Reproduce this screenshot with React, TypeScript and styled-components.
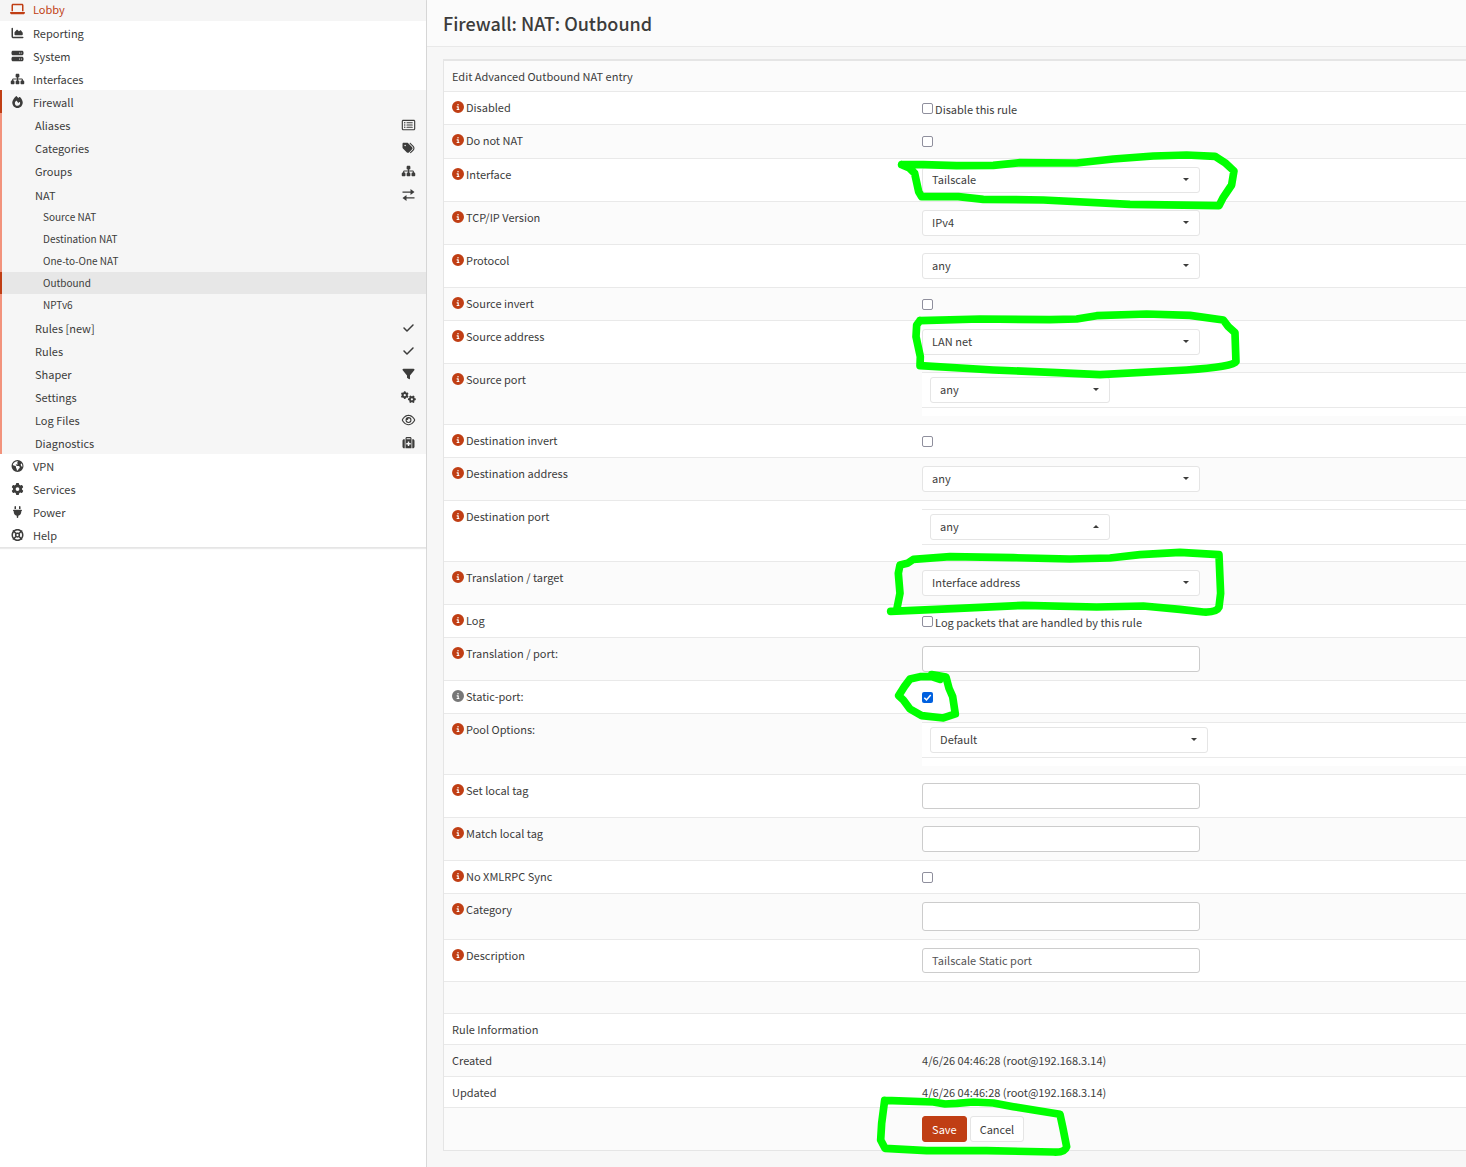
import React from "react";
import styled, { createGlobalStyle, css } from "styled-components";
import type { IconType } from "react-icons";
import {
  FaLaptop,
  FaChartArea,
  FaServer,
  FaSitemap,
  FaFire,
  FaEarthAmericas,
  FaGear,
  FaPlug,
  FaLifeRing,
  FaRegRectangleList,
  FaTags,
  FaCheck,
  FaFilter,
  FaGears,
  FaRegEye,
  FaSuitcaseMedical,
  FaCircleInfo,
} from "react-icons/fa6";

const accent = "#c03e14";
const line = "#e9e9e9";
const text = "#3c3c3b";

const GlobalStyle = createGlobalStyle`
  *, *::before, *::after { box-sizing: border-box; }
  body {
    margin: 0;
    background: #fff;
    color: ${text};
    font-family: "Noto Sans CJK SC", "Noto Sans", sans-serif;
    font-size: 11px;
    line-height: 16px;
  }
  button, input, select { font: inherit; color: inherit; }
`;

const Page = styled.div`
  position: relative;
  display: flex;
  min-height: 100vh;
  overflow: hidden;
`;

/* ---------- sidebar ---------- */

const Sidebar = styled.aside`
  flex: 0 0 427px;
  border-right: 1px solid #d9d9d9;
`;

const Menu = styled.nav`
  border-bottom: 1px solid #e5e5e5;
  box-shadow: 0 1px 1px rgba(0, 0, 0, 0.08);
`;

const List = styled.ul`
  margin: 0;
  padding: 0;
  list-style: none;
`;

const Group = styled.div`
  background: #f6f6f6;
`;

const SubList = styled(List)`
  border-left: 2px solid #f2937c;
`;

const rowBase = css`
  display: flex;
  align-items: center;
  color: ${text};
  text-decoration: none;
`;

const MainLink = styled.a<{ $first?: boolean; $tall?: boolean; $open?: boolean }>`
  ${rowBase}
  height: ${(p) => (p.$first ? 21 : p.$tall ? 24 : 23)}px;
  padding-left: ${(p) => (p.$open ? 8 : 10)}px;
  gap: 8px;
  ${(p) => p.$first && `padding-bottom: 3px; color: ${accent}; background: #f5f5f5;`}
  ${(p) => p.$open && `border-left: 2px solid ${accent};`}
`;

const IconSlot = styled.span`
  display: flex;
  justify-content: center;
  width: 15px;
  svg {
    flex: none;
    width: 15px;
    height: 12px;
  }
`;

const SubLink = styled.a<{ $tall?: boolean }>`
  ${rowBase}
  justify-content: space-between;
  height: ${(p) => (p.$tall ? 24 : 23)}px;
  padding: 0 10px 0 33px;
`;

const LeafLink = styled.a<{ $active?: boolean }>`
  ${rowBase}
  height: 22px;
  padding-left: 41px;
  font-size: 10px;
  ${(p) => p.$active && `margin-left: -2px; border-left: 2px solid ${accent}; background: #e7e7e7;`}
`;

const ExchangeIcon: IconType = () => (
  <svg width="13" height="12" viewBox="0 0 13 12" fill="currentColor" aria-hidden="true">
    <path d="M0.500 2.500h8V0l4 3-4 3V3.700h-8zM12.500 8.300h-8V6l-4 3 4 3V9.500h8z" />
  </svg>
);

type MainItem = { label: string; icon: IconType; tall?: boolean; first?: boolean };

const topItems: MainItem[] = [
  { label: "Lobby", icon: FaLaptop, first: true },
  { label: "Reporting", icon: FaChartArea },
  { label: "System", icon: FaServer },
  { label: "Interfaces", icon: FaSitemap },
];

const bottomItems: MainItem[] = [
  { label: "VPN", icon: FaEarthAmericas },
  { label: "Services", icon: FaGear },
  { label: "Power", icon: FaPlug },
  { label: "Help", icon: FaLifeRing, tall: true },
];

type SubItem = { label: string; icon: IconType; tall?: boolean; children?: string[] };

const firewallItems: SubItem[] = [
  { label: "Aliases", icon: FaRegRectangleList },
  { label: "Categories", icon: FaTags },
  { label: "Groups", icon: FaSitemap, tall: true },
  {
    label: "NAT",
    icon: ExchangeIcon,
    children: ["Source NAT", "Destination NAT", "One-to-One NAT", "Outbound", "NPTv6"],
  },
  { label: "Rules [new]", icon: FaCheck },
  { label: "Rules", icon: FaCheck },
  { label: "Shaper", icon: FaFilter },
  { label: "Settings", icon: FaGears },
  { label: "Log Files", icon: FaRegEye },
  { label: "Diagnostics", icon: FaSuitcaseMedical },
];

const MainEntry = ({ item }: { item: MainItem }) => (
  <li>
    <MainLink href="#" $first={item.first} $tall={item.tall}>
      <IconSlot>
        <item.icon />
      </IconSlot>
      {item.label}
    </MainLink>
  </li>
);

const SideMenu = () => (
  <Sidebar>
    <Menu>
      <List>
        {topItems.map((i) => (
          <MainEntry key={i.label} item={i} />
        ))}
        <li>
          <Group>
            <MainLink href="#" $open>
              <IconSlot>
                <FaFire />
              </IconSlot>
              Firewall
            </MainLink>
            <SubList>
              {firewallItems.map((i) => (
                <li key={i.label}>
                  <SubLink href="#" $tall={i.tall}>
                    {i.label}
                    <IconSlot>
                      <i.icon />
                    </IconSlot>
                  </SubLink>
                  {i.children && (
                    <List>
                      {i.children.map((c) => (
                        <li key={c}>
                          <LeafLink href="#" $active={c === "Outbound"}>
                            {c}
                          </LeafLink>
                        </li>
                      ))}
                    </List>
                  )}
                </li>
              ))}
            </SubList>
          </Group>
        </li>
        {bottomItems.map((i) => (
          <MainEntry key={i.label} item={i} />
        ))}
      </List>
    </Menu>
  </Sidebar>
);

/* ---------- main area ---------- */

const Main = styled.main`
  flex: 1;
  min-width: 0;
  background: #f7f7f7;
`;

const TitleBar = styled.header`
  display: flex;
  align-items: center;
  height: 47px;
  padding: 0 16px;
  border-bottom: 1px solid ${line};
  background: #fbfbfb;
`;

const Title = styled.h1`
  margin: 0;
  font-size: 18px;
  line-height: 24px;
  font-weight: 500;
`;

const Panel = styled.form`
  margin: 12px 0 16px 16px;
  border: 1px solid #e5e5e5;
  border-top-width: 2px;
  border-right: 0;
  background: #fff;
`;

const Table = styled.table`
  width: 100%;
  border-collapse: separate;
  border-spacing: 0;
  table-layout: fixed;
`;

const Row = styled.tr<{ $height?: number }>`
  height: ${(p) => (p.$height ? `${p.$height}px` : "auto")};
  &:nth-child(odd) {
    background: #fbfbfb;
  }
  &:not(:first-child) > td,
  &:not(:first-child) > th {
    border-top: 1px solid ${line};
  }
`;

const cell = css<{ $compact?: boolean }>`
  padding: ${(p) => (p.$compact ? "7px 0 7px 8px" : "8px 0 8px 8px")};
  vertical-align: top;
  text-align: left;
  font-weight: 400;
`;

const LabelCell = styled.th<{ $compact?: boolean }>`
  ${cell}
  width: 46%;
  padding-top: 7px;
`;

const ValueCell = styled.td<{ $compact?: boolean; $check?: boolean }>`
  ${cell}
  ${(p) => p.$check && "padding-bottom: 6px;"}
`;

const FieldName = styled.div`
  display: flex;
  align-items: center;
  gap: 2px;
`;

const InfoButton = styled.button<{ $muted?: boolean }>`
  display: flex;
  padding: 0;
  border: 0;
  background: none;
  font-size: 12px;
  color: ${(p) => (p.$muted ? "#777" : accent)};
`;

const CheckLine = styled.label`
  display: flex;
  gap: 2px;
  min-height: 18px;
  line-height: 18px;
`;

const tick =
  "url(\"data:image/svg+xml,%3Csvg xmlns='http://www.w3.org/2000/svg' viewBox='0 0 11 11'%3E%3Cpath d='M2.300 5.700l2.200 2.200 4.200-5' fill='none' stroke='white' stroke-width='1.500'/%3E%3C/svg%3E\")";

const Check = styled.input`
  appearance: none;
  flex: none;
  width: 11px;
  height: 11px;
  margin: 3px 0 0;
  border: 1px solid #8f8f9d;
  border-radius: 2px;
  background: #fff;
  &:checked {
    border: 0;
    background: #0060df ${tick} center / 11px 11px no-repeat;
  }
`;

const SelectWrap = styled.div<{ $narrow?: boolean; $up?: boolean }>`
  position: relative;
  width: ${(p) => (p.$narrow ? 180 : 278)}px;
  height: 26px;
  &::after {
    content: "";
    position: absolute;
    top: 11px;
    right: 11px;
    border: 0 solid transparent;
    border-width: ${(p) => (p.$up ? "0 3px 3px" : "3px 3px 0")};
    border-${(p) => (p.$up ? "bottom" : "top")}-color: ${text};
    pointer-events: none;
  }
`;

const Select = styled.select`
  appearance: none;
  display: block;
  width: 100%;
  height: 26px;
  padding: 0 24px 2px 9px;
  border: 1px solid #e5e5e5;
  border-radius: 3px;
  background: #fff;
`;

const TextInput = styled.input<{ $height?: number }>`
  display: block;
  width: 278px;
  height: ${(p) => p.$height ?? 26}px;
  padding: 0 9px 2px;
  border: 1px solid #ccc;
  border-radius: 3px;
  background: #fff;
  color: #555;
`;

const Nested = styled.div`
  padding-bottom: 8px;
  background: #fff;
`;

const NestedRow = styled.div`
  padding: 4px 8px;
  border: solid ${line};
  border-width: 1px 0;
`;

const Actions = styled.div`
  display: flex;
  gap: 3px;
`;

const Button = styled.button<{ $primary?: boolean }>`
  height: 26px;
  padding: 0 9px;
  border: 1px solid ${(p) => (p.$primary ? accent : "#e5e5e5")};
  border-radius: 3px;
  background: ${(p) => (p.$primary ? accent : "#fff")};
  color: ${(p) => (p.$primary ? "#fff" : text)};
`;

type Field = {
  name: string;
  kind: "check" | "select" | "nested" | "input";
  value?: string;
  caption?: string;
  checked?: boolean;
  narrow?: boolean;
  up?: boolean;
  muted?: boolean;
  inputHeight?: number;
  rowHeight?: number;
};

const fields: Field[] = [
  { name: "Disabled", kind: "check", caption: "Disable this rule" },
  { name: "Do not NAT", kind: "check", rowHeight: 34 },
  { name: "Interface", kind: "select", value: "Tailscale" },
  { name: "TCP/IP Version", kind: "select", value: "IPv4" },
  { name: "Protocol", kind: "select", value: "any" },
  { name: "Source invert", kind: "check" },
  { name: "Source address", kind: "select", value: "LAN net" },
  { name: "Source port", kind: "nested", value: "any", narrow: true },
  { name: "Destination invert", kind: "check" },
  { name: "Destination address", kind: "select", value: "any" },
  { name: "Destination port", kind: "nested", value: "any", narrow: true, up: true },
  { name: "Translation / target", kind: "select", value: "Interface address" },
  { name: "Log", kind: "check", caption: "Log packets that are handled by this rule" },
  { name: "Translation / port:", kind: "input" },
  { name: "Static-port:", kind: "check", checked: true, muted: true },
  { name: "Pool Options:", kind: "nested", value: "Default" },
  { name: "Set local tag", kind: "input" },
  { name: "Match local tag", kind: "input" },
  { name: "No XMLRPC Sync", kind: "check" },
  { name: "Category", kind: "input", inputHeight: 29 },
  { name: "Description", kind: "input", value: "Tailscale Static port", inputHeight: 25 },
];

const Picker = ({ field, id }: { field: Field; id: string }) => (
  <SelectWrap $narrow={field.narrow} $up={field.up}>
    <Select id={id} defaultValue={field.value}>
      <option>{field.value}</option>
    </Select>
  </SelectWrap>
);

const Control = ({ field, id }: { field: Field; id: string }) => {
  if (field.kind === "check")
    return (
      <CheckLine>
        <Check id={id} type="checkbox" defaultChecked={field.checked} />
        {field.caption}
      </CheckLine>
    );
  if (field.kind === "select") return <Picker field={field} id={id} />;
  if (field.kind === "nested")
    return (
      <Nested>
        <NestedRow>
          <Picker field={field} id={id} />
        </NestedRow>
      </Nested>
    );
  return <TextInput id={id} type="text" defaultValue={field.value} $height={field.inputHeight} />;
};

const FieldRow = ({ field, id }: { field: Field; id: string }) => (
  <Row $height={field.rowHeight}>
    <LabelCell scope="row">
      <FieldName>
        <InfoButton type="button" aria-label={`Help for ${field.name}`} $muted={field.muted}>
          <FaCircleInfo />
        </InfoButton>
        <label htmlFor={id}>{field.name}</label>
      </FieldName>
    </LabelCell>
    <ValueCell $check={field.kind === "check"}>
      <Control field={field} id={id} />
    </ValueCell>
  </Row>
);

/* ---------- freehand marker strokes over the form ---------- */

const Markup = styled.svg`
  position: absolute;
  top: 0;
  left: 0;
  pointer-events: none;
  fill: none;
  stroke: #00ff00;
  stroke-width: 23;
  stroke-linecap: round;
  stroke-linejoin: round;
`;

const strokes = [
  {
    x: 870,
    y: 90,
    d: "M95 224L160 224L260 227L370 226L450 218L620 219L730 207L850 198L950 195L1035 199L1065 218L1092 243L1085 285L1060 322L1047 347L780 343L520 330L340 328L265 320L155 320L146 305L134 250L118 234L95 224",
  },
  {
    x: 870,
    y: 300,
    d: "M150 62L330 57L540 59L620 57L680 47L830 42L960 46L1060 60L1075 80L1095 98L1098 185Q1090 200 950 210L690 224L560 218L370 210L150 197L151 170L138 110L140 75L150 62",
  },
  {
    x: 870,
    y: 530,
    d: "M62 244L250 236L460 226L680 231L820 228L930 238L1000 246Q1040 248 1047 232L1052 190L1047 74L930 67L810 74L720 84L600 87L430 83L240 80L130 88L112 100L90 105L85 130L90 190L80 240",
  },
  {
    x: 870,
    y: 530,
    d: "M185 434L228 441L237 475L248 500L256 552L220 564L155 557L120 537L100 510L86 497L103 470L120 447L150 440L185 440L210 448",
  },
  {
    x: 860,
    y: 1000,
    d: "M74 301L220 306L255 312L290 310L340 306L400 309L460 320L600 343L608 380L620 440Q615 458 580 456L380 452L200 452L75 445L62 420L65 370L74 301",
  },
];

const Annotations = () => (
  <Markup width="1466" height="1167" viewBox="0 0 1466 1167" aria-hidden="true">
    {strokes.map((s) => (
      <path key={s.d} transform={`translate(${s.x} ${s.y}) scale(0.3333)`} d={s.d} />
    ))}
  </Markup>
);

export default function App() {
  return (
    <Page>
      <GlobalStyle />
      <SideMenu />
      <Main>
        <TitleBar>
          <Title>Firewall: NAT: Outbound</Title>
        </TitleBar>
        <Panel onSubmit={(e) => e.preventDefault()}>
          <Table>
            <tbody>
              <Row>
                <LabelCell $compact>Edit Advanced Outbound NAT entry</LabelCell>
                <ValueCell $compact />
              </Row>
              {fields.map((f, i) => (
                <FieldRow key={f.name} field={f} id={`field-${i}`} />
              ))}
              <Row $height={32}>
                <ValueCell colSpan={2} />
              </Row>
              <Row>
                <LabelCell $compact>Rule Information</LabelCell>
                <ValueCell $compact />
              </Row>
              <Row $height={32}>
                <LabelCell $compact scope="row">
                  Created
                </LabelCell>
                <ValueCell $compact>4/6/26 04:46:28 (root@192.168.3.14)</ValueCell>
              </Row>
              <Row>
                <LabelCell $compact scope="row">
                  Updated
                </LabelCell>
                <ValueCell $compact>4/6/26 04:46:28 (root@192.168.3.14)</ValueCell>
              </Row>
              <Row>
                <ValueCell />
                <ValueCell>
                  <Actions>
                    <Button type="submit" $primary>
                      Save
                    </Button>
                    <Button type="button">Cancel</Button>
                  </Actions>
                </ValueCell>
              </Row>
            </tbody>
          </Table>
        </Panel>
      </Main>
      <Annotations />
    </Page>
  );
}
